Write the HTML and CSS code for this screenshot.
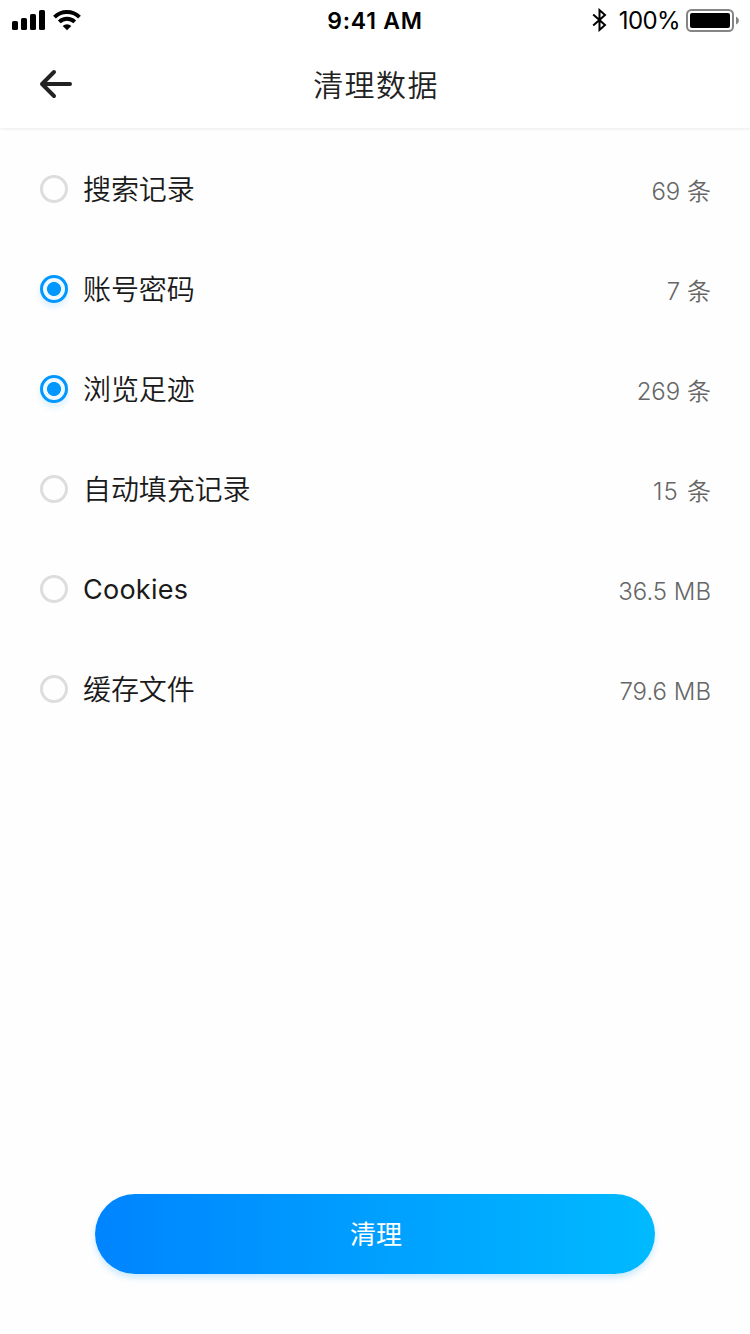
FILE: index.html
```html
<!DOCTYPE html>
<html lang="zh-CN">
<head>
<meta charset="utf-8">
<title>清理数据</title>
<link rel="stylesheet" href="styles.css">
</head>
<body>
<div class="screen">
  <div class="status">
    <div class="status-left">
      <svg width="84" height="40" viewBox="0 0 84 40">
        <rect x="12" y="21" width="6" height="9" rx="1.6"/>
        <rect x="21" y="18" width="6" height="12" rx="1.6"/>
        <rect x="30" y="14" width="6" height="16" rx="1.6"/>
        <rect x="39" y="10" width="6" height="20" rx="1.6"/>
        <g fill="none" stroke="#000" stroke-width="4">
          <path d="M54.5 17.1A18 18 0 0 1 79.5 17.1"/>
          <path d="M59.3 21.9A11 11 0 0 1 74.7 21.9"/>
        </g>
        <path d="M67 30.3L62.7 26A6.1 6.1 0 0 1 71.3 26Z"/>
      </svg>
    </div>
    <div class="status-time">9:41 AM</div>
    <div class="status-right">
      <svg class="bluetooth" width="16" height="24" viewBox="0 0 16 24" fill="none" stroke="#000" stroke-width="2"><path d="M1.2 6.4L13 17L7.5 21.9V2.1L13 7L1.2 17.6"/></svg>
      <span class="percent">100%</span>
      <svg width="54" height="24" viewBox="0 0 54 24">
        <rect x="1" y="2" width="46" height="21" rx="4.5" fill="none" stroke="#858585" stroke-width="2"/>
        <rect x="4" y="5" width="40" height="15" rx="2"/>
        <path d="M50 8.5Q53 10 53 12.5T50 16.5Z" fill="#858585"/>
      </svg>
    </div>
  </div>
  <header class="nav">
    <svg class="back" width="34" height="30" viewBox="0 0 34 30" fill="none" stroke="#222" stroke-width="4" stroke-linecap="round" stroke-linejoin="round"><path d="M31 15H3.5M15 3L3 15L15 27"/></svg>
    <h1 class="title">清理数据</h1>
  </header>
  <main class="list">
    <div class="row"><span class="radio"></span><span class="label">搜索记录</span><span class="value">69 条</span></div>
    <div class="row"><span class="radio radio-on"></span><span class="label">账号密码</span><span class="value">7 条</span></div>
    <div class="row"><span class="radio radio-on"></span><span class="label">浏览足迹</span><span class="value">269 条</span></div>
    <div class="row"><span class="radio"></span><span class="label">自动填充记录</span><span class="value value-wide">15 条</span></div>
    <div class="row"><span class="radio"></span><span class="label label-latin">Cookies</span><span class="value">36.5 MB</span></div>
    <div class="row"><span class="radio"></span><span class="label">缓存文件</span><span class="value">79.6 MB</span></div>
  </main>
  <button class="clean">清理</button>
</div>
</body>
</html>
```

FILE: styles.css
```css
* { box-sizing: border-box; }
body {
  margin: 0;
  background: #fff;
  font-family: Inter, "Noto Sans CJK SC", sans-serif;
}
.screen {
  width: 750px;
  height: 1334px;
  display: flex;
  flex-direction: column;
  background: #fefefe;
  overflow: hidden;
}
.status {
  flex: none;
  height: 40px;
  display: grid;
  grid-template: 40px / 1fr auto 1fr;
  align-items: center;
  position: relative;
  z-index: 1;
  background: #fff;
}
.status svg { display: block; }
.status-time {
  font-size: 23px;
  font-weight: 600;
  line-height: 38px;
  letter-spacing: 0.75px;
  padding-top: 2px;
}
.status-right {
  display: flex;
  justify-content: flex-end;
  align-items: center;
  padding-right: 10px;
}
.bluetooth { margin-right: 11px; }
.percent {
  font-size: 24px;
  line-height: 38px;
  letter-spacing: -0.6px;
  padding-top: 2px;
  margin-right: 6px;
}
.nav {
  flex: none;
  height: 88px;
  display: grid;
  grid-template-columns: 1fr auto 1fr;
  align-items: center;
  padding: 0 39px;
  background: #fff;
  box-shadow: 0 1px 3px rgba(0, 0, 0, 0.08);
}
.title {
  margin: 0;
  padding: 1px 0 0 2px;
  font-size: 30px;
  font-weight: 350;
  line-height: 44px;
  letter-spacing: 1.4px;
  color: #222;
}
.list {
  display: flex;
  flex-direction: column;
  padding: 11px 39px 0 40px;
}
.row {
  height: 100px;
  display: flex;
  align-items: center;
}
.radio {
  width: 28px;
  height: 28px;
  margin-right: 15px;
  border: 3px solid #ddd;
  border-radius: 50%;
}
.radio-on {
  border-color: #0098ff;
  background: radial-gradient(circle, #0098ff 6.6px, #f0f9ff 7.4px);
  box-shadow: 0 4px 6px rgba(0, 152, 255, 0.14);
}
.label {
  flex: 1;
  padding-top: 2px;
  font-size: 28px;
  font-weight: 350;
  line-height: 40px;
  letter-spacing: -0.1px;
  color: #1a1a1a;
}
.label-latin {
  font-size: 27px;
  font-weight: 380;
  letter-spacing: 0.25px;
}
.value {
  font-size: 24px;
  font-weight: 330;
  line-height: 36px;
  padding-top: 5px;
  color: #666;
}
.value-wide {
  letter-spacing: 1.2px;
  margin-right: -1.2px;
}
.clean {
  width: 560px;
  height: 80px;
  margin: auto auto 60px;
  padding: 1px 0 0 2px;
  border: 0;
  border-radius: 40px;
  background: linear-gradient(90deg, #0084ff, #00baff);
  box-shadow: 0 4px 6px rgba(0, 152, 255, 0.2);
  color: #fff;
  font-family: inherit;
  font-size: 26px;
  line-height: 79px;
}
```
